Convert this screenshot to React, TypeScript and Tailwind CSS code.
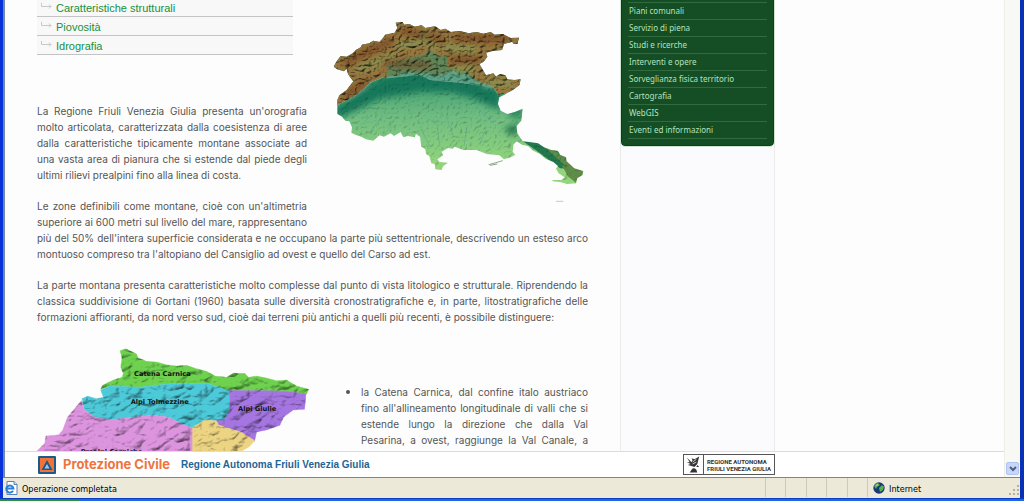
function ReliefFilter({ id, freq, depth, octaves }: { id: string; freq: string; depth: number; octaves: number }) {
  return (
    <filter id={id} x="0" y="0" width="100%" height="100%" colorInterpolationFilters="sRGB">
      <feTurbulence type="turbulence" baseFrequency={freq} numOctaves={octaves} seed="7" result="noise" />
      <feColorMatrix in="noise" type="matrix" values="0 0 0 0 0  0 0 0 0 0  0 0 0 0 0  1 0 0 0 0" result="height" />
      <feDiffuseLighting in="height" surfaceScale={depth} diffuseConstant="1.2" lightingColor="#fff" result="light">
        <feDistantLight azimuth="225" elevation="58" />
      </feDiffuseLighting>
      <feBlend in="SourceGraphic" in2="light" mode="multiply" result="shaded" />
      <feComposite in="shaded" in2="SourceGraphic" operator="in" />
    </filter>
  );
}

const REGION =
  "M227 68 L248 66 L252 74 L268 72 L284 80 L305 76 L316 84 L345 79 L362 90 L376 86 L392 96 L420 93 L446 100 L470 96 L490 101 L512 96 L524 104 L548 102 L572 114 L597 113 L592 132 L580 131 L577 125 L552 132 L546 150 L520 152 L498 158 L502 170 L490 186 L478 192 L490 212 L498 226 L520 220 L528 230 L540 222 L556 226 L562 238 L584 240 L602 238 L598 256 L578 270 L552 285 L538 292 L534 312 L542 332 L562 342 L584 336 L608 326 L604 362 L590 378 L592 400 L608 424 L628 426 L654 430 L672 442 L694 450 L714 452 L720 464 L738 472 L740 484 L762 504 L790 513 L788 526 L772 534 L768 550 L742 552 L720 546 L698 544 L697 540 L724 540 L734 532 L716 520 L708 506 L714 498 L700 486 L676 476 L660 462 L640 452 L624 438 L606 434 L590 424 L580 434 L578 456 L586 464 L572 472 L552 478 L538 466 L500 462 L470 450 L430 450 L404 440 L398 446 L384 444 L364 456 L370 466 L352 478 L358 486 L384 488 L370 498 L364 510 L346 508 L344 492 L334 490 L328 468 L318 462 L316 448 L304 440 L300 410 L288 402 L284 412 L264 408 L250 412 L242 396 L222 408 L212 400 L192 410 L178 406 L160 422 L138 418 L124 410 L106 404 L94 398 L96 382 L88 364 L76 362 L66 350 L52 342 L52 300 L58 286 L80 270 L100 244 L92 234 L84 222 L80 206 L72 214 L52 208 L41 200 L50 184 L62 168 L80 170 L98 160 L108 150 L122 142 L126 134 L148 130 L160 122 L178 126 L186 118 L196 104 L224 98 L232 84 Z";

function ReliefMap() {
  return (
    <svg className="block h-[230px] w-[281px]" viewBox="-39 0 843 690" role="img" aria-label="Friuli Venezia Giulia">
      <defs>
        <ReliefFilter id="mountains" freq="0.045 0.07" depth={7} octaves={4} />
        <ReliefFilter id="plain" freq="0.07" depth={2} octaves={3} />
        <linearGradient id="lowland" x1="0" y1="0" x2="0" y2="1">
          <stop offset="0" stopColor="#2c8f68" />
          <stop offset="0.4" stopColor="#6fbd82" />
          <stop offset="0.8" stopColor="#93d67c" />
        </linearGradient>
        <clipPath id="region">
          <path d={REGION} />
        </clipPath>
        <filter id="soften" x="-20%" y="-50%" width="140%" height="200%">
          <feGaussianBlur stdDeviation="9" />
        </filter>
      </defs>
      <g clipPath="url(#region)">
        <g filter="url(#plain)">
          <rect x="30" y="50" width="780" height="520" fill="#1f7d5a" />
          <rect x="30" y="200" width="780" height="370" fill="url(#lowland)" />
          <path d="M30 335 L130 260 L240 210 L420 200 L540 270 L540 330 L460 295 L390 275 L300 275 L180 295 L60 355 Z" fill="#17785a" filter="url(#soften)" />
          <path d="M320 355 q30 15 60 10 M350 370 l10 70 M380 350 l20 60 M440 380 l-8 60 M300 380 l30 60 M500 380 l-20 50 M150 350 l-30 30 M190 345 l-40 50 M230 350 l-30 45 M470 320 l50 50" stroke="#5faa8e" strokeWidth="2" fill="none" />
          <g filter="url(#soften)">
            <path d="M552 385 L590 372 L594 406 L566 402 Z" fill="#23734f" />
            <path d="M540 280 L608 322 L604 360 L570 350 Z" fill="#2f8a5e" />
          </g>
          <path d="M600 418 L660 425 L742 470 L764 506 L720 505 L650 452 Z" fill="#23794f" />
          <path d="M672 440 L694 446 L745 478 L764 506 L740 500 Z M725 496 L792 513 L768 548 L745 530 Z" fill="#5f8d48" />
        </g>
        <g filter="url(#mountains)">
          <path d="M30 50 H610 V250 L575 275 L535 285 L520 262 L490 250 L462 244 L440 222 L420 226 L400 212 L380 222 L350 226 L320 218 L290 222 L262 216 L230 228 L190 232 L150 248 L128 270 L100 290 L52 316 L30 320 Z" fill="#96763f" />
          <path d="M200 195 L230 182 L310 165 L330 150 L360 170 L385 165 L380 200 L440 215 L500 260 L430 250 L330 240 L300 225 L200 235 Z" fill="#3f956b" opacity="0.6" />
          <path d="M230 140 L330 120 L350 150 M110 210 L230 165 M370 140 L470 150 M400 205 L470 205 M490 250 L580 250 M310 85 L320 120" stroke="#85a85c" strokeWidth="16" fill="none" opacity="0.8" filter="url(#soften)" />
          <path d="M70 190 L220 120 M240 90 L370 120 M400 115 L570 115 M390 180 L480 180 M190 190 L330 195 M70 290 L140 245" stroke="#74401f" strokeWidth="18" fill="none" opacity="0.8" filter="url(#soften)" />
        </g>
      </g>
      <path d="M506 494 L528 488 L548 482 M510 496 L532 492" stroke="#8ea983" strokeWidth="3" fill="none" />
      <path d="M708 604 H730" stroke="#c8c8c8" strokeWidth="3" />
    </svg>
  );
}

function AreasMap() {
  return (
    <svg className="block h-[103px] w-[276px] shrink-0" viewBox="111 54 828 309" role="img" aria-label="Suddivisione della parte montana">
      <defs>
        <ReliefFilter id="hills" freq="0.014 0.022" depth={8} octaves={3} />
      </defs>
      <g filter="url(#hills)" strokeWidth="2">
        <path d="M360 62 L378 56 L392 64 L410 72 L414 84 L440 94 L470 96 L500 104 L530 108 L560 106 L590 116 L620 124 L645 138 L680 142 L700 130 L735 130 L745 142 L770 138 L800 144 L830 152 L860 150 L890 168 L926 178 L920 192 L860 184 L780 182 L690 182 L620 160 L500 162 L420 172 L330 168 L302 178 L308 166 L340 150 L366 142 L370 130 L362 112 L366 84 Z" fill="#6ed24f" stroke="#6ed24f" />
        <path d="M302 180 L330 168 L420 172 L500 162 L620 160 L688 182 L690 240 L674 270 L616 272 L574 294 L545 282 L505 262 L460 256 L400 262 L330 270 L280 260 L252 238 L246 206 L262 198 L290 206 L310 202 Z" fill="#4dcad9" stroke="#4dcad9" />
        <path d="M688 182 L780 182 L860 184 L918 192 L914 238 L880 240 L850 262 L840 286 L800 300 L770 306 L764 334 L720 306 L654 284 L650 272 L674 270 L690 240 Z" fill="#a576e2" stroke="#a576e2" />
        <path d="M574 294 L616 270 L650 274 L656 286 L722 306 L764 332 L748 350 L726 363 L574 363 Z" fill="#ecd482" stroke="#ecd482" />
        <path d="M244 212 L252 238 L280 260 L330 270 L400 262 L460 256 L505 262 L545 282 L576 294 L576 363 L111 363 L134 340 L138 318 L176 314 L188 300 L202 262 Z" fill="#dc94de" stroke="#dc94de" />
      </g>
      <g className="font-['DejaVu_Sans',sans-serif] font-bold" fontSize="20" fill="#111">
        <text x="402" y="137">Catena Carnica</text>
        <text x="392" y="221">Alpi Tolmezzine</text>
        <text x="714" y="243">Alpi Giulie</text>
        <text x="242" y="371">Prealpi Carniche</text>
      </g>
    </svg>
  );
}

const SECTIONS = ["Caratteristiche strutturali", "Piovosità", "Idrografia"];

const MENU = [
  "Piani comunali",
  "Servizio di piena",
  "Studi e ricerche",
  "Interventi e opere",
  "Sorveglianza fisica territorio",
  "Cartografia",
  "WebGIS",
  "Eventi ed informazioni",
];

function Article() {
  return (
    <article className="ml-8 w-[551px] shrink-0 font-[Inter,Arial,sans-serif] text-[10px] leading-4 text-[#555]">
      <div className="float-right">
        <ReliefMap />
      </div>
      <ul className="w-64 bg-[#f8f8f8]">
        {SECTIONS.map((s) => (
          <li key={s} className="flex h-[19px] items-end gap-1 border-b border-[#c4c4c4] pl-1 first:h-[17px]">
            <svg width="11" height="14" viewBox="0 0 11 14" fill="none" stroke="#c6c9cc">
              <path d="M0.5 1 V4.5 H10 M8 2.5 L10 4.5 L8 6.5" />
            </svg>
            <a href="#" className="font-['Liberation_Sans',Arial,sans-serif] text-[11px] text-[#16903e]">{s}</a>
          </li>
        ))}
      </ul>
      <p className="mt-12 text-justify">
        La Regione Friuli Venezia Giulia presenta un'orografia molto articolata, caratterizzata dalla coesistenza di aree
        dalla caratteristiche tipicamente montane associate ad una vasta area di pianura che si estende dal piede degli
        ultimi rilievi prealpini fino alla linea di costa.
      </p>
      <p className="mt-[15px] text-justify">
        Le zone definibili come montane, cioè con un'altimetria superiore ai 600 metri sul livello del mare, rappresentano
        più del 50% dell'intera superficie considerata e ne occupano la parte più settentrionale, descrivendo un esteso arco
        montuoso compreso tra l'altopiano del Cansiglio ad ovest e quello del Carso ad est.
      </p>
      <p className="mt-[15px] text-justify">
        La parte montana presenta caratteristiche molto complesse dal punto di vista litologico e strutturale. Riprendendo la
        classica suddivisione di Gortani (1960) basata sulle diversità cronostratigrafiche e, in parte, litostratigrafiche delle
        formazioni affioranti, da nord verso sud, cioè dai terreni più antichi a quelli più recenti, è possibile distinguere:
      </p>
      <div className="mt-[23px] flex">
        <AreasMap />
        <ul className="ml-auto mt-9 w-[227px] list-disc marker:text-xs">
          <li className="text-justify [text-align-last:justify]">
            la Catena Carnica, dal confine italo austriaco fino all'allineamento longitudinale di valli che si estende
            lungo la direzione che dalla Val Pesarina, a ovest, raggiunge la Val Canale, a
          </li>
        </ul>
      </div>
    </article>
  );
}

function SideMenu() {
  return (
    <aside className="ml-8 w-[155px] shrink-0 self-stretch border-x border-[#ececec] bg-[#fbfbfd]">
      <nav className="rounded-b-sm border-x border-b border-[#0c3d1a] bg-[#154d24] px-1.5 pb-1.5 pt-0.5 outline outline-[#cfe5d2]">
        <ul className="border-t border-[#2f6b3c]">
          {MENU.map((m) => (
            <li key={m} className="flex h-[17px] items-center border-b border-[#2f6b3c] pl-px">
              <a href="#" className="font-['Noto_Sans',sans-serif] text-[8px] leading-4 text-[#b4e3bb]">{m}</a>
            </li>
          ))}
        </ul>
      </nav>
    </aside>
  );
}

function SiteFooter() {
  return (
    <footer className="flex h-[26px] shrink-0 items-center border-t border-[#dcdcdc] bg-white pl-[33px]">
      <svg width="18" height="18" viewBox="0 0 18 18">
        <rect width="18" height="18" rx="1" fill="#1c5a8c" />
        <rect x="2" y="2" width="14" height="14" fill="#f0743a" />
        <path d="M9 4 L14.5 14 H3.5 Z" fill="#1c5a8c" />
        <path d="M9 8 L11.5 12.5 H6.5 Z" fill="#a9c4dc" />
      </svg>
      <span className="ml-[7px] w-[110px] whitespace-nowrap font-[Inter,sans-serif] text-[13px] font-bold text-[#ee7440]">
        Protezione Civile
      </span>
      <span className="ml-2 w-[193px] whitespace-nowrap text-[10px] font-bold text-[#1d6595]">
        Regione Autonoma Friuli Venezia Giulia
      </span>
      <div className="ml-[309px] flex h-[21px] w-[92px] shrink-0 items-center border border-[#555]">
        <svg width="20" height="19" viewBox="0 0 20 19" className="shrink-0 border-r border-[#555]" fill="#333">
          <path d="M3 2 L8 7 L9 5 L8 3 L11 4 L16 1 L15 5 L14 9 L11 12 L8 11 L4 10 L7 9 L3 7 L6 7 Z" />
          <path d="M8 15 Q10 12 13 15 L14 18 H6 Z M14 10 l2 2 l-3 0 Z" />
          <path d="M9 7 L13 4 M9 9 L13 7" stroke="#fff" strokeWidth="0.8" />
        </svg>
        <span className="whitespace-nowrap pl-[3px] font-[Roboto,sans-serif] text-[6px] font-bold leading-[7px] text-[#333]">
          REGIONE AUTONOMA
          <br />
          FRIULI VENEZIA GIULIA
        </span>
      </div>
    </footer>
  );
}

function StatusBar() {
  return (
    <div className="flex h-[21px] shrink-0 items-stretch border-t border-[#85857a] bg-[#ece9d8] pb-px font-['DejaVu_Sans_Condensed','DejaVu_Sans',sans-serif] text-[9px] text-black">
      <div className="flex flex-1 items-center gap-1 pl-px">
        <svg width="14" height="14" viewBox="0 0 14 14">
          <path d="M3 0.5 H10 L13 3.5 V13.5 H3 Z" fill="#fff" stroke="#5b7fb8" />
          <path d="M10 0.5 V3.5 H13" fill="#cfe0f5" stroke="#5b7fb8" />
          <path d="M9 9.8 A3.6 3.6 0 1 1 9.4 7.4 H3" fill="none" stroke="#2a7fd6" strokeWidth="2" />
        </svg>
        <span className="pt-1">Operazione completata</span>
      </div>
      <div className="w-5 border-l border-[#cdcab8]" />
      <div className="w-[21px] border-l border-[#cdcab8]" />
      <div className="w-5 border-l border-[#cdcab8]" />
      <div className="w-[21px] border-l border-[#cdcab8]" />
      <div className="w-5 border-l border-[#cdcab8]" />
      <div className="flex w-[153px] items-center gap-1 border-l border-[#cdcab8] pl-[5px]">
        <svg width="12" height="12" viewBox="0 0 12 12">
          <circle cx="6" cy="6" r="5.7" fill="#163a78" />
          <path d="M1 4 Q3 1 5 1 L7 3 L4 5 L3 7 Z M6 6 L9 3 L11 5 L10 8 L7 10 Z" fill="#5cb04a" />
          <path d="M3 3 L5 2 L4 4 Z" fill="#d6f0f5" />
        </svg>
        <span className="pt-1">Internet</span>
        <svg width="11" height="11" viewBox="0 0 11 11" className="ml-auto mt-1.5" fill="#b5b19f">
          <path d="M8 0h2v2H8z M8 4h2v2H8z M4 4h2v2H4z M8 8h2v2H8z M4 8h2v2H4z M0 8h2v2H0z" />
        </svg>
      </div>
    </div>
  );
}

export default function App() {
  return (
    <div className="flex h-screen flex-col overflow-hidden bg-[#1650d8] font-['Liberation_Sans',Arial,sans-serif]">
      <div className="flex min-h-0 flex-1 flex-col border-l-3 border-r-4 border-l-[#0831d9] border-r-[#0831b9]">
        <div className="flex min-h-0 flex-1 border-l-2 border-[#7088ac] bg-[#fdfdfd]">
          <div className="flex min-w-0 flex-1 flex-col">
            <main className="flex min-h-0 flex-1 items-start overflow-hidden">
              <Article />
              <SideMenu />
            </main>
            <SiteFooter />
          </div>
          <div className="flex w-4 shrink-0 items-end border-l border-[#eeede8] bg-[#f8f8f5] px-px pb-0.5">
            <button aria-label="Scorri in basso" className="flex h-[13px] w-[13px] items-center justify-center rounded-xs border border-[#b0c4f0] bg-[#c8d6fb]">
              <svg width="8" height="6" viewBox="0 0 8 6" fill="none" stroke="#4d6185" strokeWidth="2">
                <path d="M1 1 L4 4 L7 1" />
              </svg>
            </button>
          </div>
        </div>
        <StatusBar />
      </div>
      <div className="h-[3px] shrink-0 border-t border-[#0a3cc8] bg-[#1f66e0]">
        <div className="mt-px h-px w-20 bg-[#2f8f3c]" />
      </div>
    </div>
  );
}
